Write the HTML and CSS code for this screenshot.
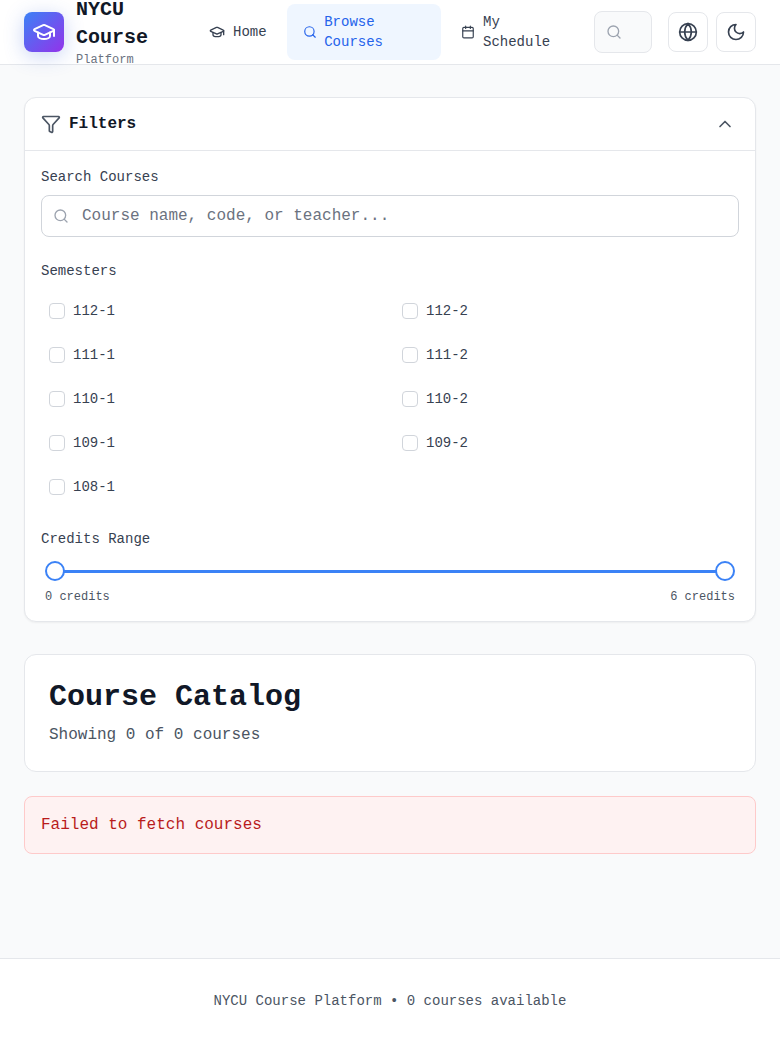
FILE: index.html
```html
<!DOCTYPE html>
<html lang="en">
<head>
<meta charset="utf-8">
<title>NYCU Course Platform</title>
<link rel="stylesheet" href="styles.css">
</head>
<body>
<svg width="0" height="0" class="sprite" aria-hidden="true">
  <symbol id="cap" viewBox="0 0 24 24"><path d="M21.42 10.922a1 1 0 0 0-.019-1.838L12.83 5.18a2 2 0 0 0-1.66 0L2.6 9.08a1 1 0 0 0 0 1.832l8.57 3.908a2 2 0 0 0 1.66 0z"/><path d="M22 10v6"/><path d="M6 12.5V16a6 3 0 0 0 12 0v-3.5"/></symbol>
  <symbol id="search" viewBox="0 0 24 24"><circle cx="11" cy="11" r="8"/><path d="m21 21-4.34-4.34"/></symbol>
  <symbol id="calendar" viewBox="0 0 24 24"><path d="M8 2v4M16 2v4M3 10h18"/><rect x="3" y="4" width="18" height="18" rx="2"/></symbol>
  <symbol id="globe" viewBox="0 0 24 24"><circle cx="12" cy="12" r="10"/><path d="M12 2a14.5 14.5 0 0 0 0 20 14.5 14.5 0 0 0 0-20M2 12h20"/></symbol>
  <symbol id="moon" viewBox="0 0 24 24"><path d="M12 3a6 6 0 0 0 9 9 9 9 0 1 1-9-9Z"/></symbol>
  <symbol id="funnel" viewBox="0 0 24 24"><path d="M10 20a1 1 0 0 0 .553.895l2 1A1 1 0 0 0 14 21v-7a2 2 0 0 1 .517-1.341L21.74 4.67A1 1 0 0 0 21 3H3a1 1 0 0 0-.742 1.67l7.225 7.989A2 2 0 0 1 10 14z"/></symbol>
  <symbol id="chevron" viewBox="0 0 24 24"><path d="m18 15-6-6-6 6"/></symbol>
</svg>

<header class="topbar">
  <div class="brand">
    <div class="logo"><svg class="icon icon-lg"><use href="#cap"/></svg></div>
    <div>
      <div class="brand-name">NYCU Course</div>
      <div class="brand-sub">Platform</div>
    </div>
  </div>
  <nav class="nav">
    <a class="nav-link nav-home"><svg class="icon"><use href="#cap"/></svg><span>Home</span></a>
    <a class="nav-link nav-browse active"><svg class="icon icon-sm"><use href="#search"/></svg><span>Browse Courses</span></a>
    <a class="nav-link nav-schedule"><svg class="icon icon-cal"><use href="#calendar"/></svg><span>My Schedule</span></a>
  </nav>
  <div class="quick-search"><svg class="icon"><use href="#search"/></svg></div>
  <div class="actions">
    <button class="icon-button" aria-label="Language"><svg class="icon icon-md"><use href="#globe"/></svg></button>
    <button class="icon-button" aria-label="Theme"><svg class="icon icon-md"><use href="#moon"/></svg></button>
  </div>
</header>

<main class="main">
  <section class="filters">
    <div class="filters-head">
      <svg class="icon icon-md"><use href="#funnel"/></svg>
      <h2 class="filters-title">Filters</h2>
      <svg class="icon icon-md"><use href="#chevron"/></svg>
    </div>
    <div class="filters-body">
      <div class="field">
        <div class="label">Search Courses</div>
        <div class="search-box"><svg class="icon"><use href="#search"/></svg><input class="search-input" type="text" placeholder="Course name, code, or teacher..."></div>
      </div>
      <div class="field">
        <div class="label">Semesters</div>
        <div class="semesters">
          <label class="semester"><span class="box"></span>112-1</label>
          <label class="semester"><span class="box"></span>112-2</label>
          <label class="semester"><span class="box"></span>111-1</label>
          <label class="semester"><span class="box"></span>111-2</label>
          <label class="semester"><span class="box"></span>110-1</label>
          <label class="semester"><span class="box"></span>110-2</label>
          <label class="semester"><span class="box"></span>109-1</label>
          <label class="semester"><span class="box"></span>109-2</label>
          <label class="semester"><span class="box"></span>108-1</label>
        </div>
      </div>
      <div class="field">
        <div class="label">Credits Range</div>
        <div class="slider"><span class="thumb"></span><span class="track"></span><span class="thumb"></span></div>
        <div class="range-values"><span>0 credits</span><span>6 credits</span></div>
      </div>
    </div>
  </section>

  <section class="catalog">
    <h1 class="catalog-title">Course Catalog</h1>
    <p class="catalog-count">Showing 0 of 0 courses</p>
  </section>

  <div class="error">Failed to fetch courses</div>
</main>

<footer class="footer">NYCU Course Platform • 0 courses available</footer>
</body>
</html>
```
FILE: styles.css
```css
* { box-sizing: border-box; }

body {
  margin: 0;
  min-height: 1043px;
  display: flex;
  flex-direction: column;
  background: #f9fafb;
  color: #111827;
  font-family: "Liberation Mono", monospace;
  font-size: 16px;
  line-height: 24px;
}

h1, h2, p { margin: 0; }

.sprite { display: none; }

.icon {
  width: 16px;
  height: 16px;
  flex: none;
  fill: none;
  stroke: currentColor;
  stroke-width: 2;
  stroke-linecap: round;
  stroke-linejoin: round;
}
.icon-sm { width: 14px; margin: 0 -.5px 0 -.3px; }
.icon-cal { width: 14px; margin: 0 .3px 0 -.3px; }
.icon-md { width: 20px; height: 20px; }
.icon-lg { width: 24px; height: 24px; }

.topbar {
  height: 65px;
  flex: none;
  display: flex;
  align-items: center;
  padding: 0 24px;
  background: #fff;
  border-bottom: 1px solid #e5e7eb;
}

.brand { width: 169px; display: flex; align-items: center; gap: 12px; }
.logo {
  width: 40px;
  height: 40px;
  flex: none;
  display: flex;
  align-items: center;
  justify-content: center;
  border-radius: 8px;
  color: #fff;
  background: linear-gradient(135deg, #3b82f6, #9333ea);
  box-shadow: 0 4px 20px rgba(59, 100, 220, .28);
}
.brand-name { width: 80px; font-size: 20px; line-height: 28px; font-weight: 700; }
.brand-sub { font-size: 12px; line-height: 16px; color: #6b7280; }

.nav { display: flex; align-items: center; gap: 4px; }
.nav-link {
  display: flex;
  align-items: center;
  gap: 8px;
  padding: 8px 16px;
  border-radius: 8px;
  font-size: 14px;
  line-height: 20px;
  color: #374151;
}
.nav-home { width: 90px; }
.nav-browse { width: 154px; }
.nav-schedule { width: 133px; }
.nav-link.active { background: #eff6ff; color: #2563eb; }

.quick-search {
  width: 58px;
  height: 42px;
  margin-left: 16px;
  padding-left: 11px;
  display: flex;
  align-items: center;
  border: 1px solid #e5e7eb;
  border-radius: 8px;
  background: #f9fafb;
  color: #9ca3af;
}
.actions { display: flex; gap: 8px; margin-left: 16px; }
.icon-button {
  width: 40px;
  height: 40px;
  padding: 0;
  display: flex;
  align-items: center;
  justify-content: center;
  border: 1px solid #e5e7eb;
  border-radius: 8px;
  background: #fff;
  color: #374151;
}

.main { flex: 1; padding: 32px 24px; }

.filters {
  margin-bottom: 32px;
  border: 1px solid #e5e7eb;
  border-radius: 12px;
  background: #fff;
  box-shadow: 0 1px 2px rgba(0, 0, 0, .05);
}
.filters-head {
  height: 53px;
  display: flex;
  align-items: center;
  gap: 8px;
  padding: 0 20px 0 16px;
  border-bottom: 1px solid #e5e7eb;
  color: #4b5563;
}
.filters-title { flex: 1; font-size: 16px; line-height: 24px; color: #111827; }

.filters-body { padding: 16px; display: flex; flex-direction: column; gap: 24px; }
.label { font-size: 14px; line-height: 20px; color: #374151; }

.search-box {
  height: 42px;
  margin-top: 8px;
  padding: 0 12px 0 11px;
  display: flex;
  align-items: center;
  gap: 13px;
  border: 1px solid #d1d5db;
  border-radius: 8px;
  color: #9ca3af;
}
.search-input {
  flex: 1;
  padding: 0;
  border: 0;
  outline: 0;
  background: none;
  font: inherit;
  color: #111827;
}
.search-input::placeholder { color: #6b7280; }

.semesters { margin-top: 12px; display: grid; grid-template-columns: 1fr 1fr; gap: 8px; }
.semester {
  display: flex;
  align-items: center;
  gap: 8px;
  padding: 8px;
  font-size: 14px;
  line-height: 20px;
  color: #374151;
}
.box { width: 16px; height: 16px; border: 1px solid #d1d5db; border-radius: 4px; background: #fff; }

.slider { display: flex; align-items: center; margin-top: 12px; padding: 0 4px; }
.thumb { width: 20px; height: 20px; border: 2px solid #3b82f6; border-radius: 50%; background: #fff; }
.track { flex: 1; height: 3px; margin: 1px -1px 0; background: #3b82f6; }
.range-values {
  display: flex;
  justify-content: space-between;
  margin-top: 8px;
  padding: 0 4px;
  font-size: 12px;
  line-height: 16px;
  color: #4b5563;
}

.catalog {
  margin-bottom: 24px;
  padding: 24px;
  border: 1px solid #e5e7eb;
  border-radius: 12px;
  background: #fff;
}
.catalog-title { font-size: 30px; line-height: 36px; }
.catalog-count { margin-top: 8px; color: #4b5563; }

.error {
  padding: 16px;
  border: 1px solid #fecaca;
  border-radius: 8px;
  background: #fef2f2;
  color: #b91c1c;
}

.footer {
  flex: none;
  padding: 32px 24px;
  border-top: 1px solid #e5e7eb;
  background: #fff;
  text-align: center;
  font-size: 14px;
  line-height: 20px;
  color: #4b5563;
}
```
